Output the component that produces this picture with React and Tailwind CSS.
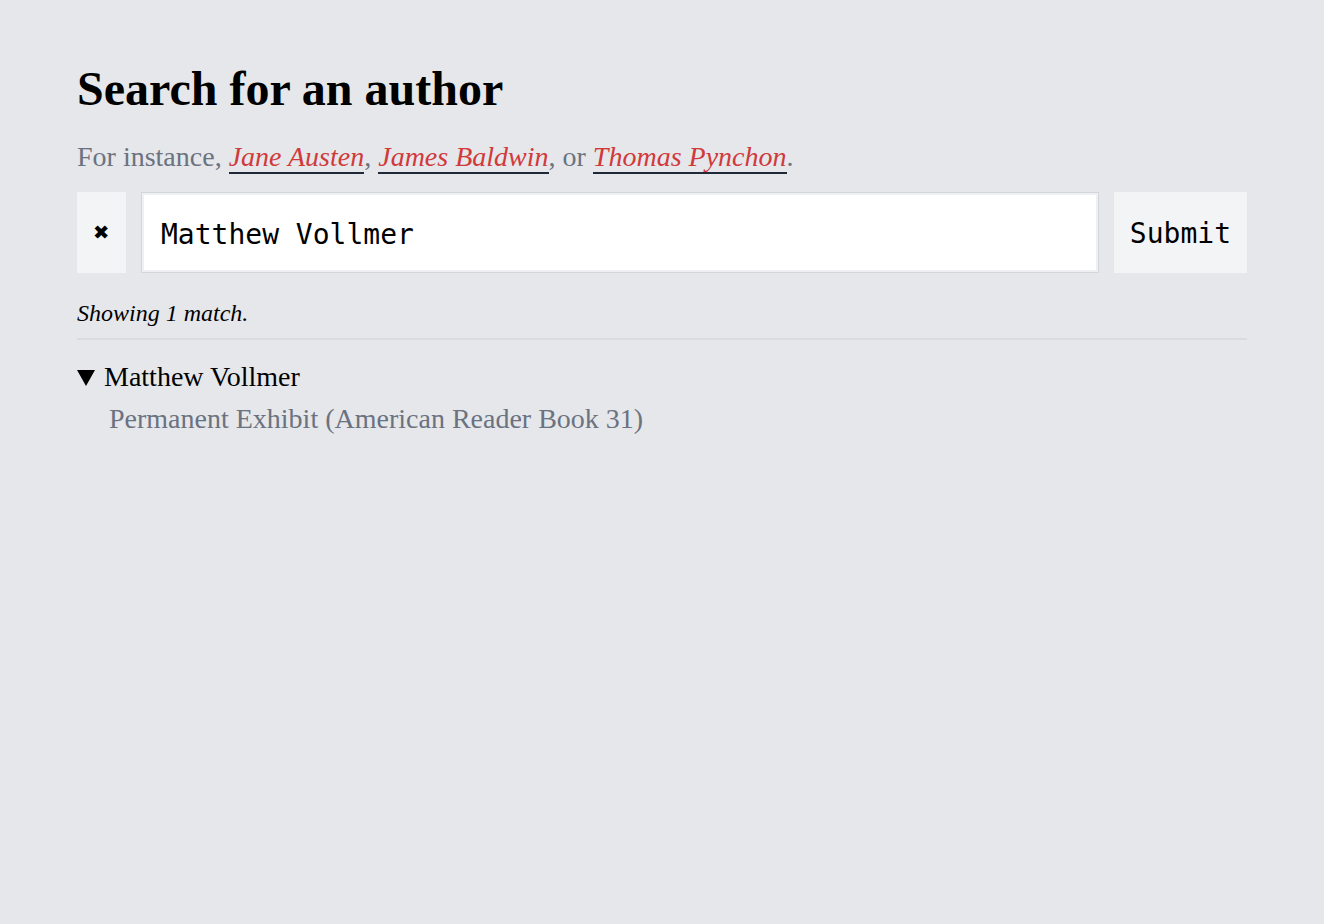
export default function App() {
  const serif = { fontFamily: '"Liberation Serif", "Times New Roman", serif' };
  return (
    <div className="min-h-screen bg-[#e5e7eb]" style={serif}>
      <div className="px-[77px] pt-[65px]">
        <h1 className="text-[48px] font-bold leading-none text-black">Search for an author</h1>
        <p className="mt-[30px] text-[28px] leading-none text-[#6b7280]">
          For instance,{" "}
          <a className="italic text-[#d13a3a] border-b-2 border-[#1f2937]">Jane Austen</a>,{" "}
          <a className="italic text-[#d13a3a] border-b-2 border-[#1f2937]">James Baldwin</a>, or{" "}
          <a className="italic text-[#d13a3a] border-b-2 border-[#1f2937]">Thomas Pynchon</a>.
        </p>
        <div className="mt-[21px] flex items-stretch gap-[15px] font-['DejaVu_Sans_Mono',monospace] text-[28px] text-black">
          <button className="w-[49px] bg-[#f3f4f6] flex items-center justify-center text-[26px]">✖</button>
          <div className="flex-1 border border-[#d4d6db] bg-[#eef0f3] p-[2px]">
            <input
              className="w-full h-[75px] pl-[17px] pr-[16px] pt-[3px] bg-white outline-none"
              defaultValue="Matthew Vollmer"
            />
          </div>
          <button className="px-[16px] pt-[2px] bg-[#f3f4f6]">Submit</button>
        </div>
        <p className="mt-[28px] text-[24px] italic leading-none pb-[13px] border-b-2 border-[#d9dbe0]">
          Showing 1 match.
        </p>
        <div className="mt-[23px] text-[28px] leading-none">
          <div className="flex items-center gap-[9px] text-black">
            <svg width="18" height="16" viewBox="0 0 18 16" className="mt-[2px]">
              <path d="M0 0 H18 L9 16 Z" fill="#000" />
            </svg>
            <span>Matthew Vollmer</span>
          </div>
          <div className="mt-[14px] pl-[32px] text-[#6b7280]">
            Permanent Exhibit (American Reader Book 31)
          </div>
        </div>
      </div>
    </div>
  );
}
